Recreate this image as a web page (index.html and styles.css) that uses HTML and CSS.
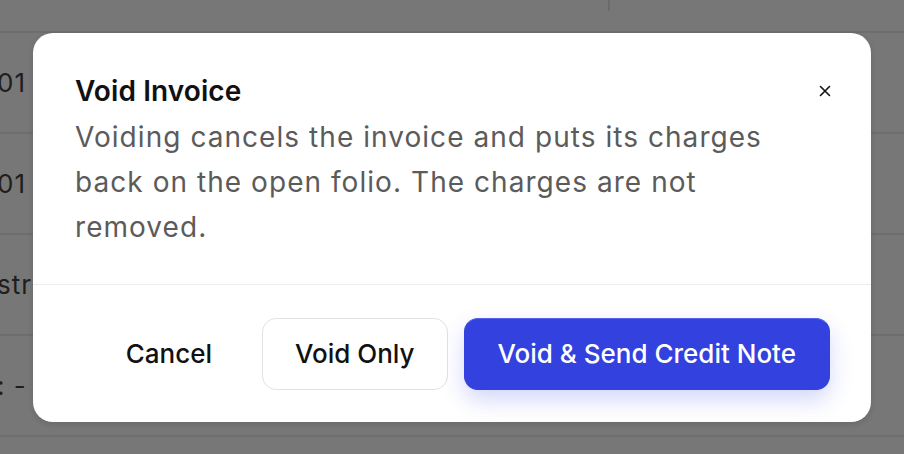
FILE: index.html
```html
<!DOCTYPE html>
<html lang="en">
<head>
<meta charset="utf-8">
<title>Void Invoice</title>
<link rel="stylesheet" href="styles.css">
</head>
<body>
<div class="page">
  <div class="table">
    <div class="row row-top"><span class="divider-v"></span></div>
    <div class="row"><span class="cell">01</span></div>
    <div class="row"><span class="cell">01</span></div>
    <div class="row"><span class="cell">str</span></div>
    <div class="row"><span class="cell">: -</span></div>
    <div class="row row-last"></div>
  </div>
  <div class="modal" role="dialog" aria-labelledby="dlg-title">
    <div class="modal-header">
      <h2 id="dlg-title" class="modal-title">Void Invoice</h2>
      <p class="modal-desc">Voiding cancels the invoice and puts its charges back on the open folio. The charges are not removed.</p>
      <button class="close-btn" aria-label="Close">
        <svg width="14" height="14" viewBox="0 0 14 14"><path d="M2.5 2.5 L11.5 11.5 M11.5 2.5 L2.5 11.5" stroke="#111" stroke-width="1.6" stroke-linecap="round" fill="none"/></svg>
      </button>
    </div>
    <div class="modal-footer">
      <button class="btn btn-ghost">Cancel</button>
      <button class="btn btn-outline">Void Only</button>
      <button class="btn btn-primary">Void &amp; Send Credit Note</button>
    </div>
  </div>
</div>
</body>
</html>
```

FILE: styles.css
```css
* { box-sizing: border-box; }
html, body { margin: 0; padding: 0; }
body {
  width: 904px;
  height: 454px;
  overflow: hidden;
  background: #777777;
  font-family: Inter, "Liberation Sans", sans-serif;
}
.page {
  position: relative;
  width: 904px;
  height: 454px;
  overflow: hidden;
}
.table {
  display: flex;
  flex-direction: column;
  height: 454px;
  overflow: hidden;
}
.row {
  position: relative;
  flex: 0 0 101px;
  border-bottom: 2px solid #6e6e6e;
  display: flex;
  align-items: center;
  color: #1e1e1e;
  font-size: 26px;
  letter-spacing: 1px;
}
.row-top {
  flex-basis: 33px;
}
.row-last {
  flex: 1 1 auto;
  border-bottom: none;
}
.cell {
  margin-left: -3px;
}
.divider-v {
  position: absolute;
  left: 608px;
  top: 0;
  width: 2px;
  height: 11px;
  background: #6b6b6b;
}
.modal {
  position: absolute;
  left: 33px;
  top: 33px;
  width: 838px;
  height: 389px;
  background: #ffffff;
  border-radius: 20px;
  box-shadow: 0 2px 6px rgba(0,0,0,0.12);
  display: flex;
  flex-direction: column;
}
.modal-header {
  position: relative;
  padding: 40px 70px 34px 42px;
  border-bottom: 1.5px solid #ececec;
}
.modal-title {
  margin: 0;
  font-size: 28px;
  font-weight: 600;
  line-height: 36px;
  color: #111111;
  letter-spacing: 0.1px;
}
.modal-desc {
  margin: 6px 0 0;
  font-size: 28px;
  line-height: 45px;
  color: #5b5b5b;
  letter-spacing: 1.05px;
}
.close-btn {
  position: absolute;
  right: 34px;
  top: 46px;
  width: 24px;
  height: 24px;
  padding: 0;
  border: none;
  background: transparent;
  display: flex;
  align-items: center;
  justify-content: center;
}
.modal-footer {
  display: flex;
  justify-content: flex-end;
  align-items: center;
  gap: 16px;
  padding: 33px 41px 33px 42px;
}
.btn {
  font-family: Inter, "Liberation Sans", sans-serif;
  font-size: 26px;
  font-weight: 500;
  line-height: 30px;
  height: 72px;
  padding: 0 33px;
  border-radius: 14px;
  border: 1.5px solid transparent;
  background: transparent;
  color: #111111;
  letter-spacing: 0;
}
.btn-outline {
  padding: 0 32px;
  border-color: #e2e2e2;
  background: #ffffff;
}
.btn-primary {
  background: #3341df;
  color: #ffffff;
  border-color: #3341df;
  border-top-color: #5563ea;
  box-shadow: 0 10px 22px rgba(60, 75, 230, 0.22);
}
```
